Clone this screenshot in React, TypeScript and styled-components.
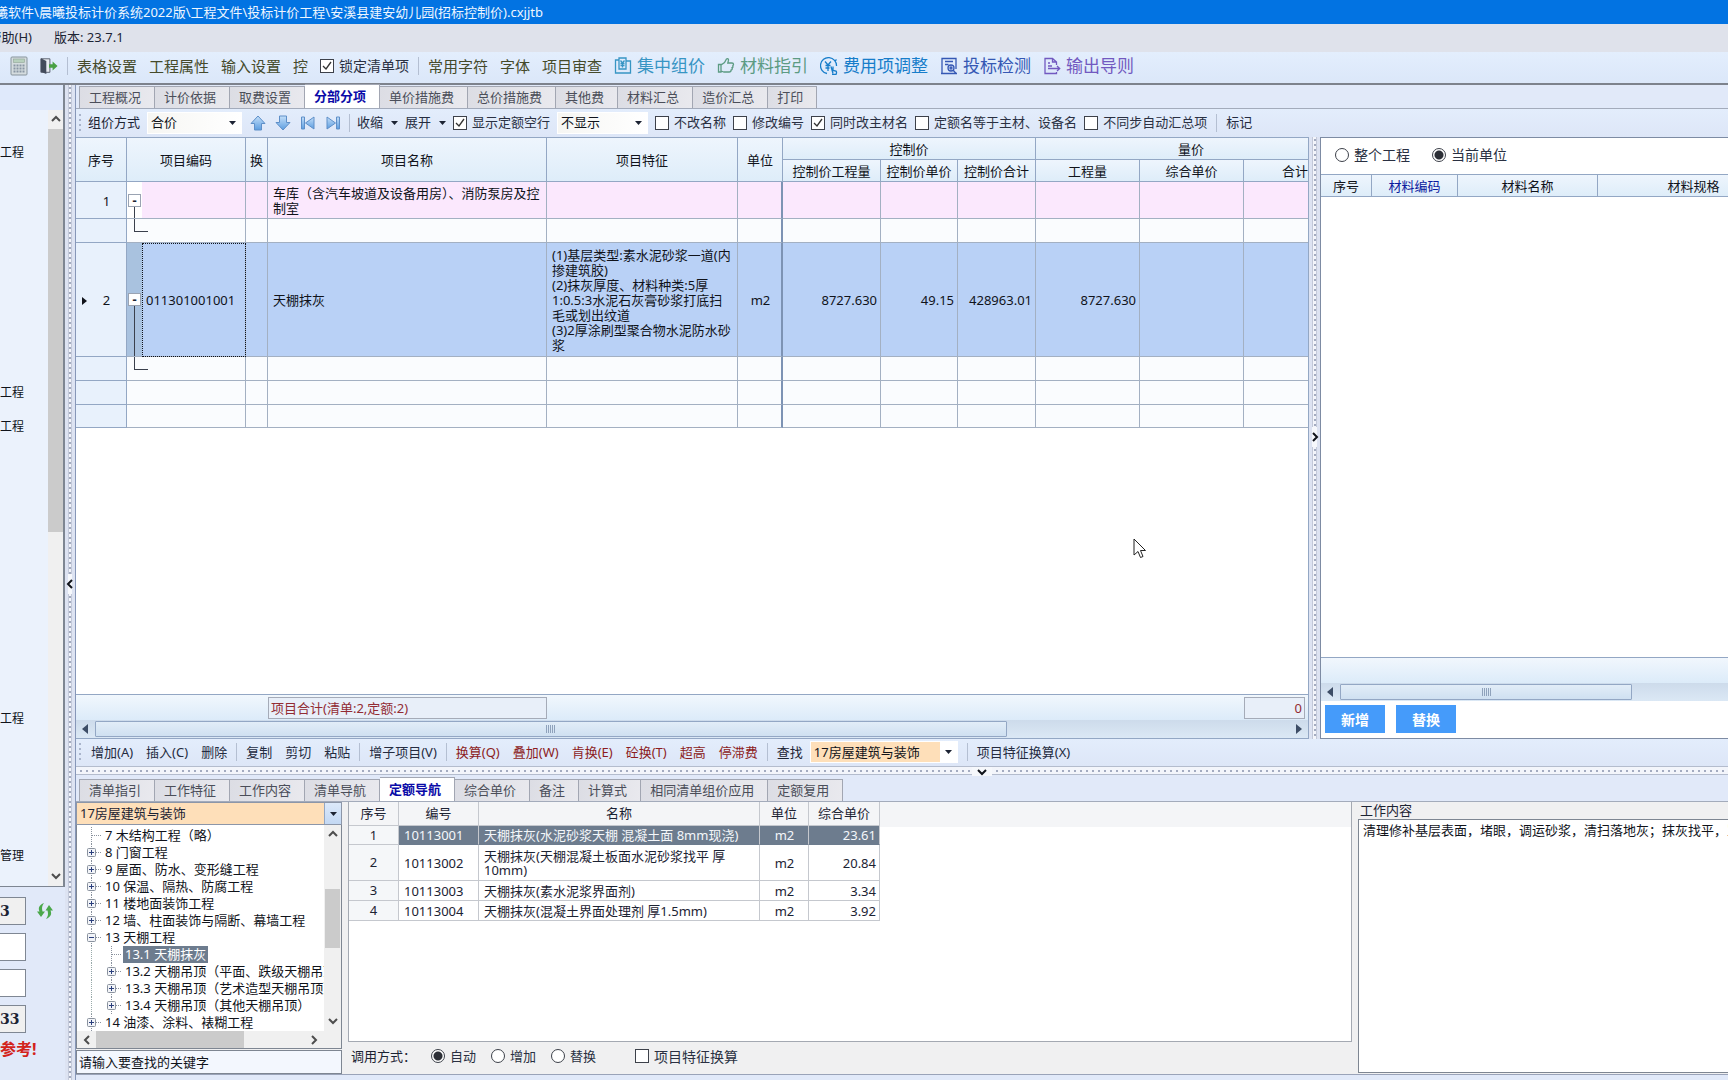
import React from "react";
import styled, { createGlobalStyle, css } from "styled-components";

const line = "#93a7c4";
const cellLine = "#a3b0c2";
const headBg = "linear-gradient(#eef5fd, #deedf9)";

const Global = createGlobalStyle`
  * { box-sizing: border-box; }
  body { margin: 0; overflow: hidden; }
  body, button, input, select, textarea {
    font-family: "Noto Sans", "Noto Sans CJK SC", sans-serif;
    font-size: 13px;
    line-height: 15px;
    color: #1c2333;
  }
  button { border: 0; background: none; padding: 0; white-space: nowrap; }
`;

const Window = styled.div`
  display: flex;
  flex-direction: column;
  height: 100vh;
  overflow: hidden;
  background: #e1e9f9;
  white-space: nowrap;
`;

const TitleBar = styled.header`
  display: flex;
  height: 24px;
  align-items: center;
  background: #0273e2;
  color: #eef6ff;
`;

/* Text that runs off the left edge of the window. */
const ClipLeft = styled.span<{ $w: number }>`
  display: flex;
  justify-content: flex-end;
  flex: none;
  width: ${(p) => p.$w}px;
  overflow: hidden;
`;

const MenuBar = styled.nav`
  display: flex;
  height: 28px;
  align-items: center;
  gap: 22px;
  padding-bottom: 1px;
  background: #dfe2eb;
`;

const MainTools = styled.div`
  display: flex;
  flex: none;
  height: 33px;
  align-items: center;
  gap: 12px;
  padding: 0 0 4px 10px;
  border-bottom: 2px solid #7d828c;
  background: linear-gradient(#e3eefd, #dbe7f9);
`;

const ToolText = styled.button`
  font-size: 15px;
  line-height: 20px;
  color: #454a2a;
`;

const Feature = styled.button<{ $c: string }>`
  display: flex;
  align-items: center;
  gap: 5px;
  font-size: 17px;
  line-height: 22px;
  color: ${(p) => p.$c};
`;

/* $pull draws the neighbours closer than the bar's own gap. */
const Sep = styled.span<{ $pull?: number }>`
  flex: none;
  width: 1px;
  height: 18px;
  margin: 0 ${(p) => -(p.$pull ?? 0)}px;
  background: #b4bfd2;
`;

const Body = styled.div`
  display: flex;
  flex: 1;
  min-height: 0;
`;

const Side = styled.aside`
  display: flex;
  flex-direction: column;
  flex: none;
  width: 65px;
`;

const SideTree = styled.div`
  display: flex;
  flex-direction: column;
  flex: 1;
  border-right: 2px solid #7e8692;
  border-bottom: 1px solid #7e8692;
`;

const SideHead = styled.div`
  height: 25px;
  background: #dfe9fb;
`;

const SideBody = styled.div`
  display: flex;
  flex: 1;
  background: #ebf2fc;
`;

const SideList = styled.ul`
  display: grid;
  flex: 1;
  grid-template-rows: 50px 240px 34px 292px 137px;
  align-content: start;
  align-items: end;
  margin: 0;
  padding: 0;
  list-style: none;
  color: #10131a;
  font-size: 12px;
`;

const SideForm = styled.form`
  display: flex;
  flex-direction: column;
  flex: none;
  height: 193px;
  gap: 8px;
  padding-top: 10px;
`;

const SideRow = styled.div`
  display: flex;
  align-items: center;
  gap: 10px;
`;

const SideField = styled.input`
  width: 26px;
  height: 28px;
  border: 1px solid #7f8793;
  border-left: 0;
  padding: 0;
  font-family: "DejaVu Serif", serif;
  font-weight: 700;
  font-size: 14px;
  background: ${(p) => (p.readOnly ? "#f0f0f0" : "#fff")};
`;

const Warning = styled.p`
  margin: 0;
  font-size: 16px;
  line-height: 16px;
  font-weight: 700;
  color: #d3231b;
`;

const dots = (dir: "x" | "y") => css`
  background-color: #f3f5fb;
  background-image: linear-gradient(
    ${dir === "y" ? "#a3abc0 2px, transparent 2px" : "90deg, #a3abc0 2px, transparent 2px"}
  );
`;

const VSplit = styled.div<{ $w: number }>`
  display: flex;
  flex-direction: column;
  flex: none;
  width: ${(p) => p.$w}px;
  padding: 0 3px;
  background: #dde3f2;
`;

const VDots = styled.div<{ $grow: number }>`
  flex: ${(p) => p.$grow} 1 0;
  border: 1px solid #c3c9d9;
  border-width: 0 1px;
  ${dots("y")}
  background-size: 2px 5px;
  background-repeat: repeat-y;
  background-position: center 2px;
`;

const SplitButton = styled.button<{ $wide?: boolean }>`
  display: flex;
  flex: none;
  align-items: center;
  justify-content: center;
  width: ${(p) => (p.$wide ? "20px" : "100%")};
  height: ${(p) => (p.$wide ? "9px" : "20px")};
  background: #f6f8fc;
  svg { flex: none; }
`;

const HSplit = styled.div`
  display: flex;
  flex: none;
  height: 9px;
  border: 1px solid #b4bccd;
  border-width: 1px 0;
`;

const HDots = styled.div<{ $w?: number }>`
  flex: ${(p) => (p.$w ? `0 0 ${p.$w}px` : "1")};
  ${dots("x")}
  background-size: 6px 2px;
  background-repeat: repeat-x;
  background-position: 4px center;
`;

const Main = styled.main`
  display: flex;
  flex-direction: column;
  flex: 1;
  min-width: 0;
  padding-bottom: 5px;
  border-left: 1px solid #8797b8;
`;

const Tabs = styled.div<{ $h: number }>`
  display: flex;
  flex: none;
  align-items: flex-end;
  height: ${(p) => p.$h}px;
  padding-left: 3px;
  border-bottom: 1px solid #a3abbb;
`;

const Tab = styled.button<{ $on?: boolean }>`
  height: 22px;
  padding: 0 13px 0 9px;
  border: 1px solid #a2a6b2;
  border-width: 1px 1px 0 0;
  background: linear-gradient(100deg, #dcdde4, #e9e9ee);
  color: #4b4e59;
  &:first-child { border-left-width: 1px; }
  ${(p) =>
    p.$on &&
    css`
      height: 24px;
      background: #fff;
      color: #0a0aa8;
      font-weight: 700;
    `}
`;

const Tools = styled.div<{ $h: number; $gap: number }>`
  display: flex;
  flex: none;
  align-items: center;
  height: ${(p) => p.$h}px;
  gap: ${(p) => p.$gap}px;
  padding-left: 3px;
  padding-bottom: 1px;
  background: linear-gradient(#e3edfc, #dde6f7);
`;

const Grip = styled.span<{ $pull?: number }>`
  flex: none;
  width: 2px;
  height: 18px;
  margin-right: ${(p) => -(p.$pull ?? 0)}px;
  background: repeating-linear-gradient(#a9b4cb 0 2px, transparent 2px 5px);
`;

const Combo = styled.label`
  display: flex;
  align-items: center;
  gap: 7px;
`;

const SelectBox = styled.span<{ $w: number; $warm?: boolean }>`
  display: flex;
  align-items: center;
  width: ${(p) => p.$w}px;
  height: 22px;
  padding-right: 5px;
  border: 1px solid #fff;
  background: ${(p) => (p.$warm ? "#fff" : "linear-gradient(90deg, #f6f6f3, #fff)")};
  gap: 5px;
  select {
    flex: 1;
    min-width: 0;
    height: 100%;
    appearance: none;
    border: 0;
    padding: 0 3px;
    color: #10131a;
    background: ${(p) => (p.$warm ? "#fedfb9" : "transparent")};
  }
`;

const Tool = styled.button<{ $hot?: boolean }>`
  color: ${(p) => (p.$hot ? "#8c1c22" : "#242b40")};
`;

const DropTool = styled(Tool)`
  display: flex;
  align-items: center;
  gap: 8px;
`;

const IconTool = styled.button`
  display: flex;
  flex: none;
  width: 18px;
  height: 18px;
  align-items: center;
  justify-content: center;
`;

const Option = styled.label<{ $size?: number }>`
  display: flex;
  align-items: center;
  gap: 5px;
  font-size: ${(p) => p.$size ?? 13}px;
  color: #2a3042;
`;

const Tick = styled.input`
  appearance: none;
  flex: none;
  width: 14px;
  height: 14px;
  margin: 0;
  border: 1px solid #3d414a;
  background: #fff;
  &:checked {
    background: #fff
      url("data:image/svg+xml,%3Csvg xmlns='http://www.w3.org/2000/svg' viewBox='0 0 12 12'%3E%3Cpath d='M2 6l3 3 5-7' fill='none' stroke='%23333' stroke-width='1.3'/%3E%3C/svg%3E");
  }
`;

const Radio = styled.input`
  appearance: none;
  flex: none;
  width: 14px;
  height: 14px;
  margin: 0;
  border: 1px solid #3d414a;
  border-radius: 50%;
  background: #fff;
  &:checked {
    background: radial-gradient(circle, #2c2f36 0 4px, #fff 5px);
  }
`;

const Upper = styled.section`
  display: flex;
  flex: 1;
  min-height: 0;
`;

const GridPanel = styled.div`
  display: flex;
  flex-direction: column;
  flex: 1;
  min-width: 0;
  border-top: 1px solid ${line};
  border-right: 1px solid ${line};
  border-bottom: 1px solid ${line};
  background: #fff;
`;

const GridView = styled.div`
  position: relative;
  flex: 1;
  min-height: 0;
  overflow: hidden;
`;

const Grid = styled.table`
  width: 1271px;
  table-layout: fixed;
  border-collapse: separate;
  border-spacing: 0;
  color: #10131a;
`;

const Th = styled.th<{ $key?: boolean }>`
  height: 22px;
  padding: 1px 0 0;
  border: 1px solid ${line};
  border-width: 0 1px 1px 0;
  background: ${headBg};
  font-weight: 400;
  overflow: hidden;
  color: ${(p) => (p.$key ? "#0b1a9e" : "inherit")};
`;

type Kind = "group" | "blank" | "current";
const rowBg: Record<Kind, string> = { group: "#fbe8fd", blank: "#fafcfe", current: "#b9d1f6" };

const GridRow = styled.tr<{ $kind: Kind; $h: number }>`
  height: ${(p) => p.$h}px;
  background: ${(p) => rowBg[p.$kind]};
`;

const Td = styled.td<{ $align?: string; $strong?: boolean }>`
  padding: 2px 3px 0 5px;
  border: 1px solid ${cellLine};
  border-width: 0 1px 1px 0;
  ${(p) => p.$strong && "border-right: 2px solid #7d93b4;"}
  text-align: ${(p) => p.$align ?? "left"};
  white-space: pre-line;
`;

const RowHead = styled.th`
  padding: 2px 0 0;
  border: 1px solid ${line};
  border-width: 0 1px 1px 0;
  background: #e8f1fc;
  font-weight: 400;
`;

const RowMark = styled.div`
  display: grid;
  grid-template-columns: 11px 1fr;
  align-items: center;
  justify-items: center;
  svg { justify-self: end; }
`;

const Gutter = styled.td<{ $fill: string; $open?: boolean; $top?: boolean }>`
  padding: 0;
  border-bottom: 1px solid ${cellLine};
  vertical-align: ${(p) => (p.$top ? "top" : "middle")};
  background: ${(p) =>
    p.$open
      ? `linear-gradient(#3a404c, #3a404c) 7px 100% / 1px 50% no-repeat, ${p.$fill}`
      : p.$fill};
`;

const Fold = styled.button`
  display: block;
  width: 13px;
  height: 13px;
  margin-left: 1px;
  border: 1px solid #9aa3b2;
  background: #fff;
  line-height: 11px;
  font-weight: 700;
`;

const Elbow = styled.div`
  width: 14px;
  height: 13px;
  margin-left: 7px;
  border-left: 1px solid #3a404c;
  border-bottom: 1px solid #3a404c;
`;

const Code = styled.td<{ $focus?: boolean }>`
  padding: 2px 4px 0;
  border: 1px solid ${cellLine};
  border-width: 0 1px 1px 0;
  ${(p) => p.$focus && "outline: 1px dotted #10131a; outline-offset: -1px;"}
`;

const Pointer = styled.svg`
  position: absolute;
  left: 1057px;
  top: 400px;
`;

const Footer = styled.div`
  display: flex;
  flex: none;
  height: 26px;
  align-items: center;
  justify-content: space-between;
  padding: 0 3px 0 192px;
  border-top: 1px solid ${line};
  background: linear-gradient(#f1f7fd, #dcebf9);
`;

const Total = styled.output<{ $w: number }>`
  width: ${(p) => p.$w}px;
  height: 22px;
  padding: 3px 2px;
  border: 1px solid #a5abb8;
  background: #e8eff9;
  color: #922b33;
  &:last-child:not(:first-child) { text-align: right; }
`;

const HScroll = styled.div`
  display: flex;
  flex: none;
  align-items: center;
  height: 18px;
  padding: 0 6px;
  gap: 7px;
  background: linear-gradient(#cddbeb, #dbe8f5);
  svg { flex: none; }
`;

const Thumb = styled.div<{ $grow: number }>`
  display: flex;
  flex: ${(p) => p.$grow} 1 0;
  height: 16px;
  align-items: center;
  justify-content: center;
  border: 1px solid ${line};
  border-radius: 1px;
  background: linear-gradient(#e2edf8, #cfe0f1);
  &::after {
    content: "";
    width: 9px;
    height: 8px;
    background: repeating-linear-gradient(90deg, #8fa2bb 0 1px, transparent 1px 2px);
  }
`;

const Rest = styled.div<{ $grow: number }>`
  flex: ${(p) => p.$grow} 1 0;
`;

const Materials = styled.div`
  display: flex;
  flex-direction: column;
  flex: none;
  width: 408px;
  overflow: hidden;
  border: 1px solid #7d8ba3;
  border-right: 0;
  background: #fff;
`;

const Scope = styled.div`
  display: flex;
  flex: none;
  height: 36px;
  align-items: center;
  gap: 22px;
  padding: 0 0 3px 14px;
`;

const MaterialHead = styled.table`
  width: 469px;
  table-layout: fixed;
  border-collapse: separate;
  border-spacing: 0;
  border-top: 1px solid ${line};
  color: #10131a;
`;

const Space = styled.div`
  flex: 1;
`;

const Actions = styled.div`
  display: flex;
  flex: none;
  height: 37px;
  gap: 11px;
  padding: 4px;
`;

const Action = styled.button`
  width: 60px;
  height: 28px;
  background: #459bfa;
  color: #fff;
  font-size: 14px;
  font-weight: 700;
`;

const Lower = styled.section`
  display: flex;
  flex: none;
  height: 273px;
  border-bottom: 1px solid #9aa3b8;
  background: #f0f0f1;
`;

const Nav = styled.div`
  display: flex;
  flex-direction: column;
  flex: none;
  width: 266px;
`;

const NavSelect = styled.label`
  display: flex;
  flex: none;
  height: 23px;
  border: 1px solid #8c96a8;
  background: #fedfb9;
  select {
    flex: 1;
    appearance: none;
    border: 0;
    padding: 0 3px;
    background: transparent;
  }
  span {
    display: flex;
    width: 17px;
    align-items: center;
    justify-content: center;
    background: linear-gradient(#dce9fa, #c3d8f3);
    border-left: 1px solid ${line};
  }
`;

const NavBox = styled.div`
  display: grid;
  grid-template: 1fr 17px / 1fr 17px;
  flex: 1;
  min-height: 0;
  border: 1px solid #7e8692;
  border-top: 0;
  background: #fff;
`;

const Tree = styled.ul`
  margin: 0;
  padding: 2px 0 0 8px;
  list-style: none;
  overflow: hidden;
  color: #10131a;
  background: #fff;
`;

const TreeItem = styled.li<{ $deep?: boolean }>`
  display: flex;
  align-items: center;
  height: 17px;
  padding-left: ${(p) => (p.$deep ? 20 : 0)}px;
  ${(p) =>
    p.$deep &&
    "background: repeating-linear-gradient(#9aa 0 1px, transparent 1px 2px) 6px 0 / 1px 100% no-repeat;"}
`;

const Branch = styled.span`
  display: flex;
  flex: none;
  width: 18px;
  height: 17px;
`;

const Node = styled.span<{ $on?: boolean }>`
  height: 17px;
  padding: 1px 2px;
  ${(p) => p.$on && "background: #6d7c8e; color: #fff;"}
`;

const Bar = styled.div<{ $row?: boolean }>`
  display: flex;
  flex-direction: ${(p) => (p.$row ? "row" : "column")};
  align-items: center;
  min-width: 0;
  min-height: 0;
  padding: ${(p) => (p.$row ? "0 4px" : "4px 0")};
  gap: 3px;
  background: #f0f0f0;
  svg { flex: none; }
`;

const BarThumb = styled.div<{ $grow: number; $row?: boolean }>`
  flex: ${(p) => p.$grow} 1 0;
  ${(p) => (p.$row ? "height: 17px;" : "width: 15px;")}
  background: #cbcbcb;
`;

const Search = styled.input`
  flex: none;
  height: 24px;
  margin-top: 1px;
  border: 1px solid #7e8692;
  padding: 0 2px;
  background: #f3f7fe;
  &::placeholder { color: #10131a; opacity: 1; }
`;

const Quotas = styled.div`
  display: flex;
  flex-direction: column;
  flex: 1;
  min-width: 0;
  margin-left: 6px;
`;

const QuotaBox = styled.div`
  flex: 1;
  min-height: 0;
  border: 1px solid #a4a9b2;
  border-top: 0;
  background: linear-gradient(#f4f5f7 25px, #fff 25px);
`;

const QuotaTable = styled.table`
  width: 531px;
  table-layout: fixed;
  border-collapse: separate;
  border-spacing: 0;
  th {
    height: 24px;
    padding: 0;
    border: 1px solid #c5c8ce;
    border-width: 0 1px 1px 0;
    font-weight: 400;
  }
  tbody th { background: #f5f7f9; }
  td {
    height: 20px;
    padding: 0 4px 0 5px;
    line-height: 14px;
    border: 1px solid #c5c8ce;
    border-width: 0 1px 1px 0;
  }
`;

const QuotaRow = styled.tr<{ $on?: boolean; $h: number }>`
  && > * { height: ${(p) => p.$h}px; }
  && > td {
    ${(p) => p.$on && "background: #6d7c8e; color: #f4f7fa; border-bottom-color: #6d7c8e;"}
  }
  && > td:nth-child(3) { white-space: normal; }
  && > td:nth-child(4) { text-align: center; }
  && > td:nth-child(5) { text-align: right; padding-right: 3px; }
`;

const CallMode = styled.div`
  display: flex;
  flex: none;
  align-items: center;
  height: 32px;
  gap: 15px;
  padding: 0 0 4px 3px;
`;

const Extra = styled.div`
  padding-left: 24px;
`;

const Work = styled.label`
  display: flex;
  flex-direction: column;
  flex: none;
  width: 376px;
  padding: 0 0 1px 6px;
  overflow: hidden;
  span { padding-left: 2px; height: 17px; line-height: 17px; }
  textarea {
    flex: 1;
    width: 720px;
    resize: none;
    border: 1px solid #7e8692;
    padding: 3px 4px;
    background: #fff;
    color: #10131a;
    outline: 0;
    overflow: hidden;
  }
`;

const Caret = () => (
  <svg width="7" height="4" viewBox="0 0 7 4"><path d="M0 0h7L3.500 4z" fill="#1c2333" /></svg>
);
const ScrollArrow = ({ right }: { right?: boolean }) => (
  <svg width="6" height="10" viewBox="0 0 6 10"><path d={right ? "M0 0v10l6-5z" : "M6 0v10L0 5z"} fill="#3d4d66" /></svg>
);
const chevrons = { up: "M2 7l4-4 4 4", down: "M2 4l4 4 4-4", left: "M8 2L4 6l4 4", right: "M4 2l4 4-4 4" };
const Chevron = ({ to, bold }: { to: keyof typeof chevrons; bold?: boolean }) => (
  <svg width="12" height="12" viewBox="0 0 12 12" fill="none" stroke={bold ? "#10131a" : "#4d4d4d"} strokeWidth="2">
    <path d={chevrons[to]} />
  </svg>
);

const blue = { fill: "url(#arrowBlue)", stroke: "#5e8fc8", strokeWidth: 1, strokeLinejoin: "round" as const };
const arrowPaths = [
  "M8 1l7 7.500h-3.500v6.500h-7V8.500H1z",
  "M8 15l7-7.500h-3.500V1h-7v6.500H1z",
  "M1.500 2h3v12h-3zM14 2v12L5.500 8z",
  "M14.500 2h-3v12h3zM2 2v12l8.500-6z",
];
const arrowNames = ["上移", "下移", "首条", "末条"];

const Glyph = ({ children }: { children: React.ReactNode }) => (
  <svg width="18" height="18" viewBox="0 0 18 18" fill="none" stroke="currentColor" strokeWidth="1.3">{children}</svg>
);

const features = [
  { c: "#3795c4", t: "集中组价", g: <Glyph><path d="M5 3H1.500v13H13M5 1h7v11H5zM12 4h4.500v12H13M6.500 3.500l2 2.500 2-2.500M8.500 6v4.500M6.500 6.500h4M6.500 8.500h4" /></Glyph> },
  { c: "#5c9b83", t: "材料指引", g: <Glyph><path d="M1.500 7.500h2.500v7.500H1.500zM4 8l3.500-2.500L9.500 2c1-.800 2.200 0 2 1.200L10.800 6H15c2 0 2 2.500.300 2.600M15.300 8.600c1 .600.900 2-.300 2.300.600.900.200 2-.900 2.100 0 1.200-.800 2-2 2H7L4 14" /></Glyph> },
  { c: "#177dca", t: "费用项调整", g: <Glyph><path d="M7 16.500A8 8 0 1 1 16.500 9M5 4.500L8 8l3-3.500M8 8v6M5.500 8.500h5M5.500 11h4M11 9.500l2 7M13 9.500v4l3 .500c.800 1 .500 2.500 0 3.500h-4M16.500 2.500l-2 2" /></Glyph> },
  { c: "#3558b4", t: "投标检测", g: <Glyph><path d="M8 16.500H2v-15h14V12M1 16.500h16M5 4.500h8M5 7.500h3.500" /><circle cx="11" cy="11" r="3" /><circle cx="11" cy="11" r="1" /><path d="M13 13l3 3.500" /></Glyph> },
  { c: "#7259c0", t: "输出导则", g: <Glyph><path d="M13.500 8V5l-4-3.500H2v15h11.500V15M9.500 1.500V5h4M5 6h2M5 9h4M5 11.500h11.500M14 9l2.700 2.500L14 14" /></Glyph> },
];

const topTabs = ["工程概况", "计价依据", "取费设置", "分部分项", "单价措施费", "总价措施费", "其他费", "材料汇总", "造价汇总", "打印"];
const lowTabs = ["清单指引", "工作特征", "工作内容", "清单导航", "定额导航", "综合单价", "备注", "计算式", "相同清单组价应用", "定额复用"];
const gridOptions: [string, boolean][] = [["不改名称", false], ["修改编号", false], ["同时改主材名", true], ["定额名等于主材、设备名", false], ["不同步自动汇总项", false]];
const editTools = [["增加(A)", "插入(C)", "删除"], ["复制", "剪切", "粘贴"], ["增子项目(V)"]];
const hotTools = ["换算(Q)", "叠加(W)", "肯换(E)", "砼换(T)", "超高", "停滞费"];
const gridCols = [51, 15, 104, 22, 279, 191, 45, 98, 77, 78, 104, 104, 103];
const quantityNote = "(1)基层类型:素水泥砂浆一道(内\n掺建筑胶)\n(2)抹灰厚度、材料种类:5厚\n1:0.5:3水泥石灰膏砂浆打底扫\n毛或划出纹道\n(3)2厚涂刷型聚合物水泥防水砂\n浆";

type Leaf = { t: string; deep?: boolean; fold?: "+" | "-"; on?: boolean };
const tree: Leaf[] = [
  { t: "7 木结构工程（略）" },
  { t: "8 门窗工程", fold: "+" },
  { t: "9 屋面、防水、变形缝工程", fold: "+" },
  { t: "10 保温、隔热、防腐工程", fold: "+" },
  { t: "11 楼地面装饰工程", fold: "+" },
  { t: "12 墙、柱面装饰与隔断、幕墙工程", fold: "+" },
  { t: "13 天棚工程", fold: "-" },
  { t: "13.1 天棚抹灰", deep: true, on: true },
  { t: "13.2 天棚吊顶（平面、跌级天棚吊顶）", deep: true, fold: "+" },
  { t: "13.3 天棚吊顶（艺术造型天棚吊顶）", deep: true, fold: "+" },
  { t: "13.4 天棚吊顶（其他天棚吊顶）", deep: true, fold: "+" },
  { t: "14 油漆、涂料、裱糊工程", fold: "+" },
];

const quotas: [string, string, string, number][] = [
  ["10113001", "天棚抹灰(水泥砂浆天棚 混凝土面 8mm现浇)", "23.61", 19],
  ["10113002", "天棚抹灰(天棚混凝土板面水泥砂浆找平 厚 10mm)", "20.84", 36],
  ["10113003", "天棚抹灰(素水泥浆界面剂)", "3.34", 20],
  ["10113004", "天棚抹灰(混凝土界面处理剂 厚1.5mm)", "3.92", 20],
];

const BlankCells = ({ from = 0 }: { from?: number }) => (
  <>
    {Array.from({ length: 10 - from }, (_, i) => (
      <Td key={i} $strong={i + from === 3} />
    ))}
  </>
);

function ProjectGrid() {
  return (
    <Grid>
      <colgroup>{gridCols.map((w, i) => <col key={i} width={w} />)}</colgroup>
      <thead>
        <tr>
          <Th rowSpan={2}>序号</Th>
          <Th rowSpan={2} colSpan={2}>项目编码</Th>
          <Th rowSpan={2}>换</Th>
          <Th rowSpan={2}>项目名称</Th>
          <Th rowSpan={2}>项目特征</Th>
          <Th rowSpan={2}>单位</Th>
          <Th colSpan={3}>控制价</Th>
          <Th colSpan={3}>量价</Th>
        </tr>
        <tr>
          {["控制价工程量", "控制价单价", "控制价合计", "工程量", "综合单价", "合计"].map((t) => <Th key={t}>{t}</Th>)}
        </tr>
      </thead>
      <tbody>
        <GridRow $kind="group" $h={37}>
          <RowHead><RowMark><i /><span>1</span></RowMark></RowHead>
          <Gutter $fill="#fff" $open><Fold aria-label="折叠">-</Fold></Gutter>
          <Code />
          <Td />
          <Td>{"车库（含汽车坡道及设备用房）、消防泵房及控\n制室"}</Td>
          <BlankCells from={2} />
        </GridRow>
        <GridRow $kind="blank" $h={24}>
          <RowHead />
          <Gutter $fill="#fafcfe" $top><Elbow /></Gutter>
          <Code />
          <BlankCells />
        </GridRow>
        <GridRow $kind="current" $h={114}>
          <RowHead>
            <RowMark>
              <svg width="5" height="8" viewBox="0 0 5 8"><path d="M0 0v8l5-4z" fill="#10131a" /></svg>
              <span>2</span>
            </RowMark>
          </RowHead>
          <Gutter $fill="#a9c2df" $open><Fold aria-label="折叠">-</Fold></Gutter>
          <Code $focus>011301001001</Code>
          <Td />
          <Td>天棚抹灰</Td>
          <Td>{quantityNote}</Td>
          <Td $align="center" $strong>m2</Td>
          <Td $align="right">8727.630</Td>
          <Td $align="right">49.15</Td>
          <Td $align="right">428963.01</Td>
          <Td $align="right">8727.630</Td>
          <Td />
          <Td />
        </GridRow>
        {[0, 1, 2].map((n) => (
          <GridRow key={n} $kind="blank" $h={n === 2 ? 23 : 24}>
            <RowHead />
            <Gutter $fill="#fafcfe" $top>{n === 0 && <Elbow />}</Gutter>
            <Code />
            <BlankCells />
          </GridRow>
        ))}
      </tbody>
    </Grid>
  );
}

const BranchMark = ({ leaf }: { leaf: Leaf }) => (
  <Branch>
    <svg width="18" height="17" viewBox="0 0 18 17" fill="none" stroke="#8a929e">
      <path d="M6.500 0v17" strokeDasharray="1 1" />
      <path d="M7 8.500h10" strokeDasharray="1 1" />
      {leaf.fold && (
        <>
          <rect x="2.500" y="4.500" width="8" height="8" rx="1" fill="#f2f4f8" />
          <path d={leaf.fold === "+" ? "M4 8.500h5M6.500 6v5" : "M4 8.500h5"} stroke="#2b3f7c" />
        </>
      )}
    </svg>
  </Branch>
);

const Hidden = styled.svg`
  position: absolute;
`;

export default function App() {
  return (
    <Window>
      <Global />
      <Hidden width="0" height="0">
        <defs>
          <linearGradient id="arrowBlue" x1="0" y1="0" x2="0" y2="1">
            <stop offset="0" stopColor="#c4dff9" />
            <stop offset="1" stopColor="#5b9de0" />
          </linearGradient>
        </defs>
      </Hidden>
      <TitleBar>
        <ClipLeft $w={543}>曦软件\晨曦投标计价系统2022版\工程文件\投标计价工程\安溪县建安幼儿园(招标控制价).cxjjtb</ClipLeft>
      </TitleBar>
      <MenuBar>
        <ClipLeft $w={32}><button>帮助(H)</button></ClipLeft>
        <span>版本: 23.7.1</span>
      </MenuBar>
      <MainTools>
        <IconTool aria-label="计算器">
          <svg width="18" height="20" viewBox="0 0 18 20">
            <rect x="1" y="1" width="16" height="18" rx="1" fill="#d5dcdf" stroke="#87949c" />
            <rect x="3.500" y="3" width="11" height="3.500" fill="#b7d0bd" stroke="#8fa397" strokeWidth=".6" />
            <path d="M3.500 9.500h11M3.500 12.500h11M3.500 15.500h11" stroke="#8996a4" strokeWidth="2" strokeDasharray="2 1" />
          </svg>
        </IconTool>
        <IconTool aria-label="退出">
          <svg width="20" height="20" viewBox="0 0 20 20">
            <path d="M1 2h10v15H1z" fill="#e8ecf2" stroke="#4d5563" />
            <path d="M1 1.500l6 3V19l-6-2.500z" fill="#434b5b" />
            <path d="M10 8h4V5l5.500 5-5.500 5v-3h-4z" fill="#49a043" />
          </svg>
        </IconTool>
        <Sep $pull={3} />
        {["表格设置", "工程属性", "输入设置", "控"].map((t) => <ToolText key={t}>{t}</ToolText>)}
        <Option $size={14}><Tick type="checkbox" defaultChecked />锁定清单项</Option>
        <Sep $pull={3} />
        {["常用字符", "字体", "项目审查"].map((t) => <ToolText key={t}>{t}</ToolText>)}
        {features.map((f) => <Feature key={f.t} $c={f.c}>{f.g}{f.t}</Feature>)}
      </MainTools>
      <Body>
        <Side>
          <SideTree>
            <SideHead />
            <SideBody>
              <SideList>
                <li>工程</li><li>工程</li><li>工程</li><li>工程</li><li>管理</li>
              </SideList>
              <Bar><Chevron to="up" /><BarThumb $grow={406} /><Rest $grow={334} /><Chevron to="down" /></Bar>
            </SideBody>
          </SideTree>
          <SideForm>
            <SideRow>
              <SideField aria-label="合计" readOnly value="3" />
              <IconTool type="button" aria-label="刷新">
                <svg width="18" height="18" viewBox="0 0 18 18" fill="#4aa84a">
                  <path d="M8 1C3 3 2 6 3.500 9.500H1L5 15l4-5.500H6.500C5.500 6 6 3.500 8 1z" />
                  <path d="M10 17c5-2 6-5 4.500-8.500H17L13 3 9.500 8.500h2C12.500 12 12 14.500 10 17z" />
                </svg>
              </IconTool>
            </SideRow>
            <SideField aria-label="数值一" />
            <SideField aria-label="数值二" />
            <SideField aria-label="总价" readOnly value="33" />
            <Warning>参考!</Warning>
          </SideForm>
        </Side>
        <VSplit $w={10}>
          <VDots $grow={488} />
          <SplitButton aria-label="收起左栏"><Chevron to="left" bold /></SplitButton>
          <VDots $grow={486} />
        </VSplit>
        <Main>
          <Tabs $h={24}>{topTabs.map((t) => <Tab key={t} $on={t === "分部分项"}>{t}</Tab>)}</Tabs>
          <Tools $h={28} $gap={7}>
            <Grip />
            <Combo>组价方式<SelectBox $w={95}><select><option>合价</option></select><Caret /></SelectBox></Combo>
            {arrowPaths.map((d, i) => (
              <IconTool key={d} aria-label={arrowNames[i]}>
                <svg width="16" height="16" viewBox="0 0 16 16"><path d={d} {...blue} /></svg>
              </IconTool>
            ))}
            <Sep />
            <DropTool>收缩<Caret /></DropTool>
            <DropTool>展开<Caret /></DropTool>
            <Option><Tick type="checkbox" defaultChecked />显示定额空行</Option>
            <SelectBox $w={91}><select aria-label="显示方式"><option>不显示</option></select><Caret /></SelectBox>
            {gridOptions.map(([t, on]) => <Option key={t}><Tick type="checkbox" defaultChecked={on} />{t}</Option>)}
            <Sep $pull={-2} />
            <Tool>标记</Tool>
          </Tools>
          <Upper>
            <GridPanel>
              <GridView>
                <ProjectGrid />
                <Pointer width="14" height="22" viewBox="0 0 14 22">
                  <path d="M1 1v16l4-3.500 2.500 6 2.500-1-2.500-6H12.500z" fill="#fff" stroke="#222" />
                </Pointer>
              </GridView>
              <Footer><Total $w={279}>项目合计(清单:2,定额:2)</Total><Total $w={61}>0</Total></Footer>
              <HScroll><ScrollArrow /><Thumb $grow={912} /><Rest $grow={276} /><ScrollArrow right /></HScroll>
            </GridPanel>
            <VSplit $w={11}>
              <VDots $grow={290} />
              <SplitButton aria-label="收起右栏"><Chevron to="right" bold /></SplitButton>
              <VDots $grow={292} />
            </VSplit>
            <Materials>
              <Scope>
                <Option $size={14}><Radio type="radio" name="scope" />整个工程</Option>
                <Option $size={14}><Radio type="radio" name="scope" defaultChecked />当前单位</Option>
              </Scope>
              <MaterialHead>
                <colgroup><col width={51} /><col width={86} /><col width={140} /><col width={192} /></colgroup>
                <thead><tr><Th>序号</Th><Th $key>材料编码</Th><Th>材料名称</Th><Th>材料规格</Th></tr></thead>
              </MaterialHead>
              <Space />
              <Footer />
              <HScroll><ScrollArrow /><Thumb $grow={292} /><Rest $grow={83} /></HScroll>
              <Actions><Action>新增</Action><Action>替换</Action></Actions>
            </Materials>
          </Upper>
          <Tools $h={27} $gap={13}>
            <Grip $pull={3} />
            {editTools.map((group) => (
              <React.Fragment key={group[0]}>
                {group.map((t) => <Tool key={t}>{t}</Tool>)}
                <Sep $pull={4} />
              </React.Fragment>
            ))}
            {hotTools.map((t) => <Tool key={t} $hot>{t}</Tool>)}
            <Sep $pull={4} />
            <Combo>查找<SelectBox $w={148} $warm><select><option>17房屋建筑与装饰</option></select><Caret /></SelectBox></Combo>
            <Sep $pull={4} />
            <Tool>项目特征换算(X)</Tool>
          </Tools>
          <HSplit>
            <HDots $w={896} />
            <SplitButton $wide aria-label="收起下栏"><Chevron to="down" bold /></SplitButton>
            <HDots />
          </HSplit>
          <Tabs $h={27}>{lowTabs.map((t) => <Tab key={t} $on={t === "定额导航"}>{t}</Tab>)}</Tabs>
          <Lower>
            <Nav>
              <NavSelect>
                <select aria-label="定额库"><option>17房屋建筑与装饰</option></select>
                <span><Caret /></span>
              </NavSelect>
              <NavBox>
                <Tree>
                  {tree.map((leaf) => (
                    <TreeItem key={leaf.t} $deep={leaf.deep}>
                      <BranchMark leaf={leaf} />
                      <Node $on={leaf.on}>{leaf.t}</Node>
                    </TreeItem>
                  ))}
                </Tree>
                <Bar><Chevron to="up" /><Rest $grow={44} /><BarThumb $grow={61} /><Rest $grow={63} /><Chevron to="down" /></Bar>
                <Bar $row><Chevron to="left" /><BarThumb $row $grow={148} /><Rest $grow={58} /><Chevron to="right" /></Bar>
                <Bar />
              </NavBox>
              <Search aria-label="查找" placeholder="请输入要查找的关键字" />
            </Nav>
            <Quotas>
              <QuotaBox>
                <QuotaTable>
                  <colgroup><col width={50} /><col width={80} /><col width={281} /><col width={49} /><col width={71} /></colgroup>
                  <thead><tr>{["序号", "编号", "名称", "单位", "综合单价"].map((t) => <th key={t}>{t}</th>)}</tr></thead>
                  <tbody>
                    {quotas.map(([code, name, price, h], i) => (
                      <QuotaRow key={code} $on={i === 0} $h={h}>
                        <th>{i + 1}</th><td>{code}</td><td>{name}</td><td>m2</td><td>{price}</td>
                      </QuotaRow>
                    ))}
                  </tbody>
                </QuotaTable>
              </QuotaBox>
              <CallMode role="radiogroup" aria-label="调用方式">
                <span>调用方式：</span>
                {["自动", "增加", "替换"].map((t, i) => (
                  <Option key={t}><Radio type="radio" name="mode" defaultChecked={i === 0} />{t}</Option>
                ))}
                <Extra><Option $size={14}><Tick type="checkbox" />项目特征换算</Option></Extra>
              </CallMode>
            </Quotas>
            <Work>
              <span>工作内容</span>
              <textarea defaultValue="清理修补基层表面，堵眼，调运砂浆，清扫落地灰；抹灰找平，罩面" />
            </Work>
          </Lower>
        </Main>
      </Body>
    </Window>
  );
}
